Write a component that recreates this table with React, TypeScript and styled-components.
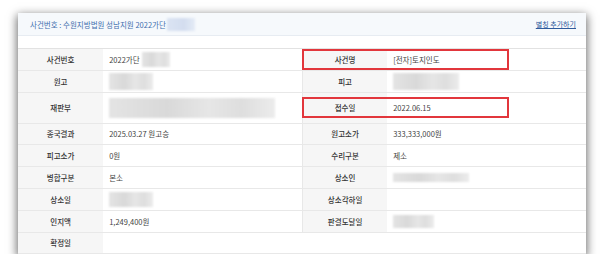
import styled, { createGlobalStyle } from 'styled-components';

const GlobalStyle = createGlobalStyle`
  html, body {
    margin: 0;
    padding: 0;
    background: #ffffff;
  }

  body {
    font-family: 'Noto Sans CJK KR', 'Noto Sans', sans-serif;
    color: #444;
  }
`;

const StyledPage = styled.div`
  padding: 13px 20px 0 18px;
`;

const StyledCard = styled.div`
  width: 568px;
  background: #ffffff;
  box-shadow: 0 3px 9px 1px rgba(0, 0, 0, 0.58);
`;

const StyledHeader = styled.div`
  display: flex;
  align-items: center;
  justify-content: space-between;
  height: 22px;
  padding: 0 10px 0 12px;
  background: #f6f9fc;
  border-bottom: 1px solid #e7ecf2;
`;

const StyledCaseTitle = styled.div`
  display: flex;
  align-items: center;
  font-size: 7.5px;
  color: #3f6fae;
`;

const StyledAliasLink = styled.a`
  font-size: 7px;
  color: #2f5b9c;
  text-decoration: underline;
  cursor: pointer;
`;

const StyledBody = styled.div`
  padding-top: 12px;
`;

const StyledTable = styled.div`
  border-top: 1px solid #e2e2e2;
`;

const StyledRow = styled.div<{ $tall?: boolean }>`
  display: grid;
  grid-template-columns: 15% 35% 15% 35%;
  grid-template-rows: 100%;
  height: ${({ $tall }) => ($tall ? '31px' : '21.8px')};
  border-bottom: 1px solid #e8e8e8;
  box-sizing: border-box;
`;

const StyledLabel = styled.div<{ $col: number; $divider?: boolean }>`
  grid-row: 1;
  grid-column: ${({ $col }) => $col};
  display: flex;
  align-items: center;
  justify-content: center;
  background: #f6f6f6;
  font-size: 7.5px;
  font-weight: 500;
  color: #333;
  border-left: ${({ $divider }) => ($divider ? '1px solid #e8e8e8' : 'none')};
`;

const StyledValue = styled.div<{ $col: number; $span?: number }>`
  grid-row: 1;
  grid-column: ${({ $col, $span }) => ($span ? `${$col} / span ${$span}` : $col)};
  display: flex;
  align-items: center;
  padding: 0 6px;
  font-size: 7.5px;
  color: #444;
`;

const StyledHighlight = styled.div`
  grid-row: 1;
  grid-column: 3 / 5;
  justify-self: start;
  align-self: center;
  width: 207px;
  height: 21px;
  box-sizing: border-box;
  border: 2px solid #e2363c;
  pointer-events: none;
`;

const StyledRedacted = styled.span<{ $w: number; $h: number; $tone?: 'gray' | 'blue' }>`
  display: inline-block;
  width: ${({ $w }) => $w}px;
  height: ${({ $h }) => $h}px;
  background: ${({ $tone }) =>
    $tone === 'blue'
      ? 'linear-gradient(90deg, #dbe4f3, #d3ddef 60%, #e4ebf6)'
      : 'linear-gradient(90deg, #e4e4e4, #d9d9d9 35%, #e6e6e6 60%, #dedede 80%, #ececec)'};
  filter: blur(1px);
`;

type Cell = {
  label: string;
  value?: React.ReactNode;
};

type RowData = {
  left: Cell;
  right?: Cell;
  tall?: boolean;
  highlight?: boolean;
};

const rows: RowData[] = [
  {
    left: {
      label: '사건번호',
      value: (
        <>
          2022가단
          <StyledRedacted $w={28} $h={15} style={{ marginLeft: 2 }} />
        </>
      ),
    },
    right: { label: '사건명', value: '[전자]토지인도' },
    highlight: true,
  },
  {
    left: { label: '원고', value: <StyledRedacted $w={44} $h={17} /> },
    right: { label: '피고', value: <StyledRedacted $w={66} $h={17} /> },
  },
  {
    left: { label: '재판부', value: <StyledRedacted $w={166} $h={20} /> },
    right: { label: '접수일', value: '2022.06.15' },
    tall: true,
    highlight: true,
  },
  {
    left: { label: '종국결과', value: '2025.03.27 원고승' },
    right: { label: '원고소가', value: '333,333,000원' },
  },
  {
    left: { label: '피고소가', value: '0원' },
    right: { label: '수리구분', value: '제소' },
  },
  {
    left: { label: '병합구분', value: '본소' },
    right: { label: '상소인', value: <StyledRedacted $w={76} $h={9} /> },
  },
  {
    left: { label: '상소일', value: <StyledRedacted $w={44} $h={15} /> },
    right: { label: '상소각하일', value: '' },
  },
  {
    left: { label: '인지액', value: '1,249,400원' },
    right: { label: '판결도달일', value: <StyledRedacted $w={41} $h={13} /> },
  },
  {
    left: { label: '확정일', value: '' },
  },
];

const App = () => {
  return (
    <>
      <GlobalStyle />
      <StyledPage>
        <StyledCard>
          <StyledHeader>
            <StyledCaseTitle>
              사건번호 : 수원지방법원 성남지원 2022가단
              <StyledRedacted $w={28} $h={13} $tone="blue" style={{ marginLeft: 1 }} />
            </StyledCaseTitle>
            <StyledAliasLink>별칭 추가하기</StyledAliasLink>
          </StyledHeader>
          <StyledBody>
            <StyledTable>
              {rows.map((row, index) => (
                <StyledRow key={index} $tall={row.tall}>
                  <StyledLabel $col={1}>{row.left.label}</StyledLabel>
                  <StyledValue $col={2} $span={row.right ? undefined : 3}>
                    {row.left.value}
                  </StyledValue>
                  {row.right && (
                    <>
                      <StyledLabel $col={3} $divider>
                        {row.right.label}
                      </StyledLabel>
                      <StyledValue $col={4}>{row.right.value}</StyledValue>
                    </>
                  )}
                  {row.highlight && <StyledHighlight />}
                </StyledRow>
              ))}
            </StyledTable>
          </StyledBody>
        </StyledCard>
      </StyledPage>
    </>
  );
};

export default App;
